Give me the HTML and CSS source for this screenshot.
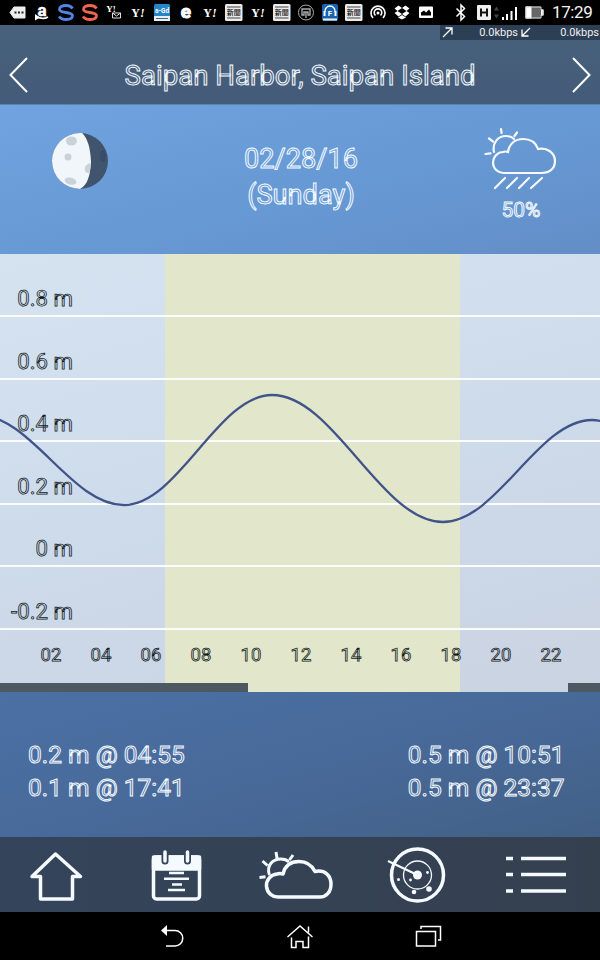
FILE: index.html
```html
<!DOCTYPE html>
<html lang="en">
<head>
<meta charset="utf-8">
<title>Tides</title>
<link rel="stylesheet" href="styles.css">
</head>
<body>
<div class="screen">
  <div class="status">
    <div class="notes">
      <svg viewBox="0 0 24 25"><path d="M4 12.500L8 7h11v11H8z" fill="#eee" stroke="#eee" stroke-linejoin="round"/><path d="M8.500 12.500h9" stroke="#222" stroke-width="2" stroke-dasharray="2 1.500"/></svg>
      <svg viewBox="0 0 24 25"><text x="12" y="15.500" text-anchor="middle" font-size="17" font-weight="700" fill="#fff" stroke="#fff" stroke-width=".5">a</text><path d="M6 16.500q7 3.500 12 .5" fill="none" stroke="#fff" stroke-width="1.600"/><path d="M5 14v6.500l5-3z" fill="#fff"/></svg>
      <svg class="blue" viewBox="0 0 24 25"><path d="M18.500 8.500C17 6 14.500 5.500 12 5.500C8 5.500 5.500 7 5.500 9.500C5.500 13.500 18.500 11.500 18.500 15.500C18.500 18 16 19.500 12 19.500C9 19.500 6.500 18.700 5 16.500" fill="none" stroke="currentColor" stroke-width="2.800"/></svg>
      <svg class="red" viewBox="0 0 24 25"><path d="M18.500 8.500C17 6 14.500 5.500 12 5.500C8 5.500 5.500 7 5.500 9.500C5.500 13.500 18.500 11.500 18.500 15.500C18.500 18 16 19.500 12 19.500C9 19.500 6.500 18.700 5 16.500" fill="none" stroke="currentColor" stroke-width="2.800"/></svg>
      <svg viewBox="0 0 24 25"><text x="9" y="11.500" text-anchor="middle" class="serif" font-size="9" font-weight="700" fill="#fff">Y!</text><path d="M10.500 13h8v5h-8zl4 3 4-3" fill="none" stroke="#ddd"/></svg>
      <svg viewBox="0 0 24 25"><text x="12" y="16.500" text-anchor="middle" class="serif" font-size="12" font-weight="700" fill="#fff">Y<tspan font-style="italic">!</tspan></text></svg>
      <svg viewBox="0 0 24 25"><rect x="4" y="4" width="16" height="17" rx="1.500" fill="#2685c7"/><path d="M4 16h16v5H4z" fill="#eee"/><path d="M6 18.500h12" stroke="#2470a8"/><text x="12" y="12.500" text-anchor="middle" font-size="6.500" font-weight="700" fill="#fff">a-Gd</text></svg>
      <svg viewBox="0 0 24 25"><text x="12" y="17.500" text-anchor="middle" font-size="19" font-weight="700" fill="#fff" stroke="#fff">e</text></svg>
      <svg viewBox="0 0 24 25"><text x="12" y="16.500" text-anchor="middle" class="serif" font-size="12" font-weight="700" fill="#fff">Y<tspan font-style="italic">!</tspan></text></svg>
      <svg viewBox="0 0 24 25"><rect x="3" y="4" width="17.500" height="17" rx="1.500" fill="#ececec"/><path d="M5 7h13.500M5 18h13.500" stroke="#444" stroke-width="1.200"/><text x="11.800" y="15.300" text-anchor="middle" font-size="7" font-weight="700" fill="#333">新聞</text></svg>
      <svg viewBox="0 0 24 25"><text x="12" y="16.500" text-anchor="middle" class="serif" font-size="12" font-weight="700" fill="#fff">Y<tspan font-style="italic">!</tspan></text></svg>
      <svg viewBox="0 0 24 25"><rect x="3" y="4" width="17.500" height="17" rx="1.500" fill="#ececec"/><path d="M5 7h13.500M5 18h13.500" stroke="#444" stroke-width="1.200"/><text x="11.800" y="15.300" text-anchor="middle" font-size="7" font-weight="700" fill="#333">新聞</text></svg>
      <svg viewBox="0 0 24 25"><g fill="none" stroke="#aaa"><circle cx="12" cy="12.500" r="7.500"/><path d="M8 15V9h8v6h-2v-3h-4v3zM12 12v6" stroke-width="1.400"/></g></svg>
      <svg viewBox="0 0 24 25"><rect x="4" y="4" width="16" height="17" rx="2" fill="#1765b0"/><path d="M5 18.500h14v2H5z" fill="#eee"/><path d="M7 12v-1a5 5 0 0110 0v1" fill="none" stroke="#fff" stroke-width="1.300"/><path d="M5.500 11h2v5h-2zM16.500 11h2v5h-2z" fill="#fff"/><text x="12" y="15.500" text-anchor="middle" font-size="8" font-weight="700" fill="#fff">F</text></svg>
      <svg viewBox="0 0 24 25"><rect x="3" y="4" width="17.500" height="17" rx="1.500" fill="#ececec"/><path d="M5 7h13.500M5 18h13.500" stroke="#444" stroke-width="1.200"/><text x="11.800" y="15.300" text-anchor="middle" font-size="7" font-weight="700" fill="#333">新聞</text></svg>
      <svg viewBox="0 0 24 25"><g fill="none" stroke="#fff" stroke-width="1.600"><path d="M7 18a7 7 0 1110 0"/><path d="M9.500 15.500a3.800 3.800 0 115 0"/></g><circle cx="12" cy="13" r="1.500" fill="#fff"/></svg>
      <svg viewBox="0 0 24 25"><path d="M8.500 5.500L12 8l-4.500 3L4.500 8.500zM15.500 5.500L12 8l4.500 3 3-2.500zM4.500 13l3-2L12 14l-3.500 2.500zM19.500 13l-3-2L12 14l3.500 2.500zM8 17.500L12 15l4 2.500-4 2z" fill="#fff"/></svg>
      <svg viewBox="0 0 24 25"><rect x="5" y="6.500" width="14" height="11.500" rx="1" fill="#fff"/><path d="M7 15.500v-3l3-2 2 2 3-3 2 3v3z" fill="#000"/></svg>
    </div>
    <svg class="system" viewBox="0 0 100 25">
      <path d="M6.500 8.500l8 8-3.500 3.500V5l3.500 3.500-8 8" fill="none" stroke="#fff" stroke-width="1.500"/>
      <rect x="27" y="5" width="14" height="15" rx="1" fill="#eee"/><path d="M31 8.500v8M37 8.500v8M31 12.500h6" stroke="#111" stroke-width="2"/>
      <path d="M44 10.500l2.500-4 2.500 4zM44 14.500l2.500 4 2.500-4z" fill="#444"/>
      <path d="M53 17v3M57 14v6M61.500 11v9M66 7v13" stroke="#fff" stroke-width="2"/>
      <path d="M75.500 6.500h15v3h3v6h-3v3h-15z" fill="#666"/><path d="M75.500 6.500h6v12h-6zM91 9.500h2.500v6H91z" fill="#fff"/><path d="M76 7h15v3h2v5h-2v3H76z" fill="none" stroke="#ddd"/>
    </svg>
    <span class="clock">17:29</span>
  </div>

  <header class="title">
    <svg class="chev" viewBox="0 0 20 36"><path d="M18 1L1.500 18 18 35"/></svg>
    <h1 class="outline">Saipan Harbor, Saipan Island</h1>
    <svg class="chev" viewBox="0 0 20 36"><path d="M2 1l16.500 17L2 35"/></svg>
    <div class="speed">
      <svg viewBox="0 0 14 14"><path d="M2 12l9-9M4.500 3H11v6.500"/></svg><span>0.0kbps</span>
      <svg viewBox="0 0 14 14"><path d="M12 3l-8 8M4 4.500V11h6.500"/></svg><span>0.0kbps</span>
    </div>
  </header>

  <section class="today">
    <svg class="moon" viewBox="0 0 58 58">
      <circle cx="29" cy="29" r="28" fill="#41546e"/>
      <path d="M29 1a28 28 0 000 56Q39 52 40 30Q39 8 31 1z" fill="#f0f6fa"/>
      <g fill="#cad2d8"><ellipse cx="20.500" cy="9" rx="5.500" ry="4.500"/><circle cx="17" cy="25" r="3.500"/><ellipse cx="19.500" cy="49" rx="6" ry="3.500" transform="rotate(15 19 49)"/><path d="M39.500 31c-8 2-7 11-1 10q1-5 1-10z"/></g>
      <ellipse cx="52" cy="24" rx="3" ry="6" fill="#394c68"/>
    </svg>
    <div class="date outline">02/28/16<br>(Sunday)</div>
    <div class="weather">
      <svg viewBox="0 0 74 64"><g fill="none" stroke="#f4faff" stroke-width="2.200" stroke-linecap="round">
        <path d="M20 46a10.500 10.500 0 01-1-21q2-1 5 0C25 17 31 12 39 12c8 0 13 4 15 10 9-2 17 4 17 12s-6 12-13 12z"/>
        <path d="M10 25C8 16 14 9 22 9q5 0 8 3"/>
        <path d="M1.500 27l5-.700M5 11.500l4 3M17 2l.600 4M33 5.500L30.500 9M21 51L11 61M33 51L23 61M45 51L35 61M58 51L47 61"/>
      </g></svg>
      <span class="outline">50%</span>
    </div>
  </section>

  <section class="chart">
    <div class="levels">
      <div><span class="outline">0.8 m</span></div>
      <div><span class="outline">0.6 m</span></div>
      <div><span class="outline">0.4 m</span></div>
      <div><span class="outline">0.2 m</span></div>
      <div><span class="outline">0 m</span></div>
      <div><span class="outline">-0.2 m</span></div>
    </div>
    <div class="hours outline"><span>02</span><span>04</span><span>06</span><span>08</span><span>10</span><span>12</span><span>14</span><span>16</span><span>18</span><span>20</span><span>22</span></div>
    <div class="moonbar"><i></i><i></i></div>
    <svg class="curve" viewBox="0 254 600 438"><path d="M-22 415C31 415 71 505 124 505C178 505 218 395 272 395C334 395 381 522 443 522C497 522 538 420 592 420Q596 420 601 421"/></svg>
  </section>

  <section class="tides outline">
    <div>0.2 m @ 04:55<br>0.1 m @ 17:41</div>
    <div>0.5 m @ 10:51<br>0.5 m @ 23:37</div>
  </section>

  <nav class="tabs">
    <svg viewBox="0 0 80 60"><path d="M40 7L16.500 29.500H25V52H57V29.500H65z" transform="translate(-.5 0)"/></svg>
    <svg viewBox="0 0 80 60"><rect x="17.500" y="10" width="46" height="42" rx="3"/><path d="M17.500 10h46v12h-46z" fill="#f4faff"/><path d="M29 6v8M51.500 6v8" stroke="#35445a" stroke-width="7" stroke-linecap="round"/><path d="M29 5v9M51.500 5v9" stroke-width="3.500" stroke-linecap="round"/><path d="M33 26h15M28 31.700h25M36 37.500h10M32 43h17" stroke-width="2.500"/></svg>
    <svg viewBox="0 0 80 60"><path d="M29 50.500a11.500 11.500 0 01-2-23q3-1 6 0C35 19 41 15 49 15c8 0 13 4 16 10 10-2 16 4 16 12.500S76 50.500 70 50.500z" transform="translate(-6 -.5)"/><path d="M13.500 28C10 18 17 12 25 12q5 0 8 3M3.500 30.500l6-.800M6.500 14l5 4.500M20 5l1 6M37 8l-3.500 5" stroke-width="3"/></svg>
    <svg viewBox="0 0 80 60"><circle cx="41.500" cy="28" r="26"/><circle cx="41.500" cy="28" r="14" stroke-width="1.300"/><path d="M12 14l29.500 14" stroke-width="2.300"/><g fill="#f4faff" stroke="none"><circle cx="41.500" cy="28" r="4.500"/><circle cx="53" cy="42" r="2.800"/><circle cx="38" cy="45" r="2.300"/><circle cx="22.500" cy="32.500" r="1.500"/><circle cx="34.500" cy="33" r="1.400"/><circle cx="51.500" cy="25.500" r="1.400"/></g></svg>
    <svg viewBox="0 0 80 60"><path d="M10 11.500h7M25 11.500h45M10 27.500h7M25 27.500h45M10 44h7M25 44h45" stroke-width="3.500"/></svg>
  </nav>

  <div class="keys">
    <svg viewBox="0 0 28 28"><path d="M5 7.500h12a7.700 7.700 0 010 15.500H8"/><path d="M3 7.500l6-5.500v11z" fill="#fff" stroke="none"/></svg>
    <svg viewBox="0 0 28 28"><path d="M1.500 14L14 3l12.500 11M5.500 14.500v10H10v-6h7v6h5.500v-11M22.500 9.500v-6"/></svg>
    <svg viewBox="0 0 28 28"><path d="M2.500 8.500h19V23h-19zM7 6V3.500h19.500V17H24"/></svg>
  </div>
</div>
</body>
</html>
```
FILE: styles.css
```css
* { box-sizing: border-box; }
body { margin: 0; font-family: Roboto, "Noto Sans CJK JP", sans-serif; background: #000; }
svg { display: block; }
.serif { font-family: "Liberation Serif", serif; }
.screen { width: 600px; height: 960px; display: flex; flex-direction: column; overflow: hidden; }
.screen > * { flex: none; }

.status { height: 25px; background: #000; display: flex; padding-left: 6px; color: #f3f3f3; }
.notes { display: flex; width: 444px; }
.notes svg { width: 24px; height: 25px; overflow: visible; }
.blue { color: #5284e8; }
.red { color: #f26550; }
.system { width: 100px; height: 25px; }
.clock { font-size: 17px; line-height: 25px; margin-left: 2px; letter-spacing: -.4px; }

.outline { color: rgba(244, 250, 255, .1); -webkit-text-stroke: .95px #f4faff; font-weight: 400; }

.title { height: 79px; position: relative; display: flex; justify-content: space-between; padding: 32px 9px 0; background: linear-gradient(#48617c, #435b78); }
.title h1 { margin: 0; font-size: 27.600px; line-height: 37px; white-space: nowrap; }
.chev { width: 20px; height: 36px; fill: none; stroke: #fff; stroke-width: 2; }
.speed { position: absolute; top: 0; right: 0; width: 160px; height: 15px; background: #2d3f54; color: #eee; font-size: 11px; line-height: 16px; display: grid; grid-template-columns: 14px 63px 14px 67px; padding-left: 1px; text-align: right; }
.speed svg { width: 14px; height: 14px; fill: none; stroke: #fff; stroke-width: 1.300; }

.today { height: 150px; display: grid; grid-template-columns: 160px 1fr 160px; background: linear-gradient(165deg, #70a3df, #679ad5 50%, #638ec7); border-top: 1px solid #5b84b4; }
.moon { width: 58px; height: 58px; margin: 27px 0 0 51px; }
.date { text-align: center; font-size: 27.200px; line-height: 36px; margin: 36px 0 0 2px; }
.weather { display: flex; flex-direction: column; align-items: center; padding: 22px 0 0 2px; }
.weather svg { width: 74px; height: 64px; }
.weather span { font-size: 21px; line-height: 26px; margin-top: 6px; }

.chart { height: 438px; position: relative; background: linear-gradient(90deg, transparent 165px, #e2e6ca 165px 460px, transparent 460px), linear-gradient(165deg, #d5e3f1, #cddaea 55%, #cad3e2); }
.chart .outline { color: rgba(16, 24, 32, .06); -webkit-text-stroke: .75px #101820; }
.levels { display: grid; grid-template-rows: 63px repeat(5, 62.600px); }
.levels div { border-bottom: 2px solid #fafcff; display: flex; align-items: flex-end; padding-bottom: 3px; }
.levels span { width: 73px; text-align: right; font-size: 22.200px; line-height: 27px; }
.hours { display: grid; grid-template-columns: repeat(11, 50px); padding-left: 26px; text-align: center; font-size: 18.500px; height: 53px; line-height: 51px; }
.moonbar { height: 9px; display: flex; justify-content: space-between; }
.moonbar i { background: #4d5862; width: 32px; }
.moonbar i:first-child { width: 248px; }
.curve { position: absolute; inset: 0; width: 600px; height: 438px; fill: none; stroke: #415489; stroke-width: 2.300; }

.tides { height: 145px; display: flex; justify-content: space-between; padding: 47px 35.500px 0 28px; font-size: 24.500px; line-height: 32.500px; white-space: nowrap; background: linear-gradient(165deg, #4b70a4, #486a9a 50%, #426086); }

.tabs { height: 75px; display: grid; grid-template-columns: repeat(5, 80px); column-gap: 40px; justify-content: center; padding: 10px 8px 0 0; background: linear-gradient(90deg, #34445a, #35404f); }
.tabs svg { width: 80px; height: 60px; fill: none; stroke: #f4faff; stroke-width: 3.500; overflow: visible; stroke-linejoin: round; }

.keys { height: 48px; background: #000; display: flex; justify-content: center; gap: 100px; padding-top: 11px; }
.keys svg { width: 28px; height: 28px; fill: none; stroke: #fff; stroke-width: 1.500; }
```
